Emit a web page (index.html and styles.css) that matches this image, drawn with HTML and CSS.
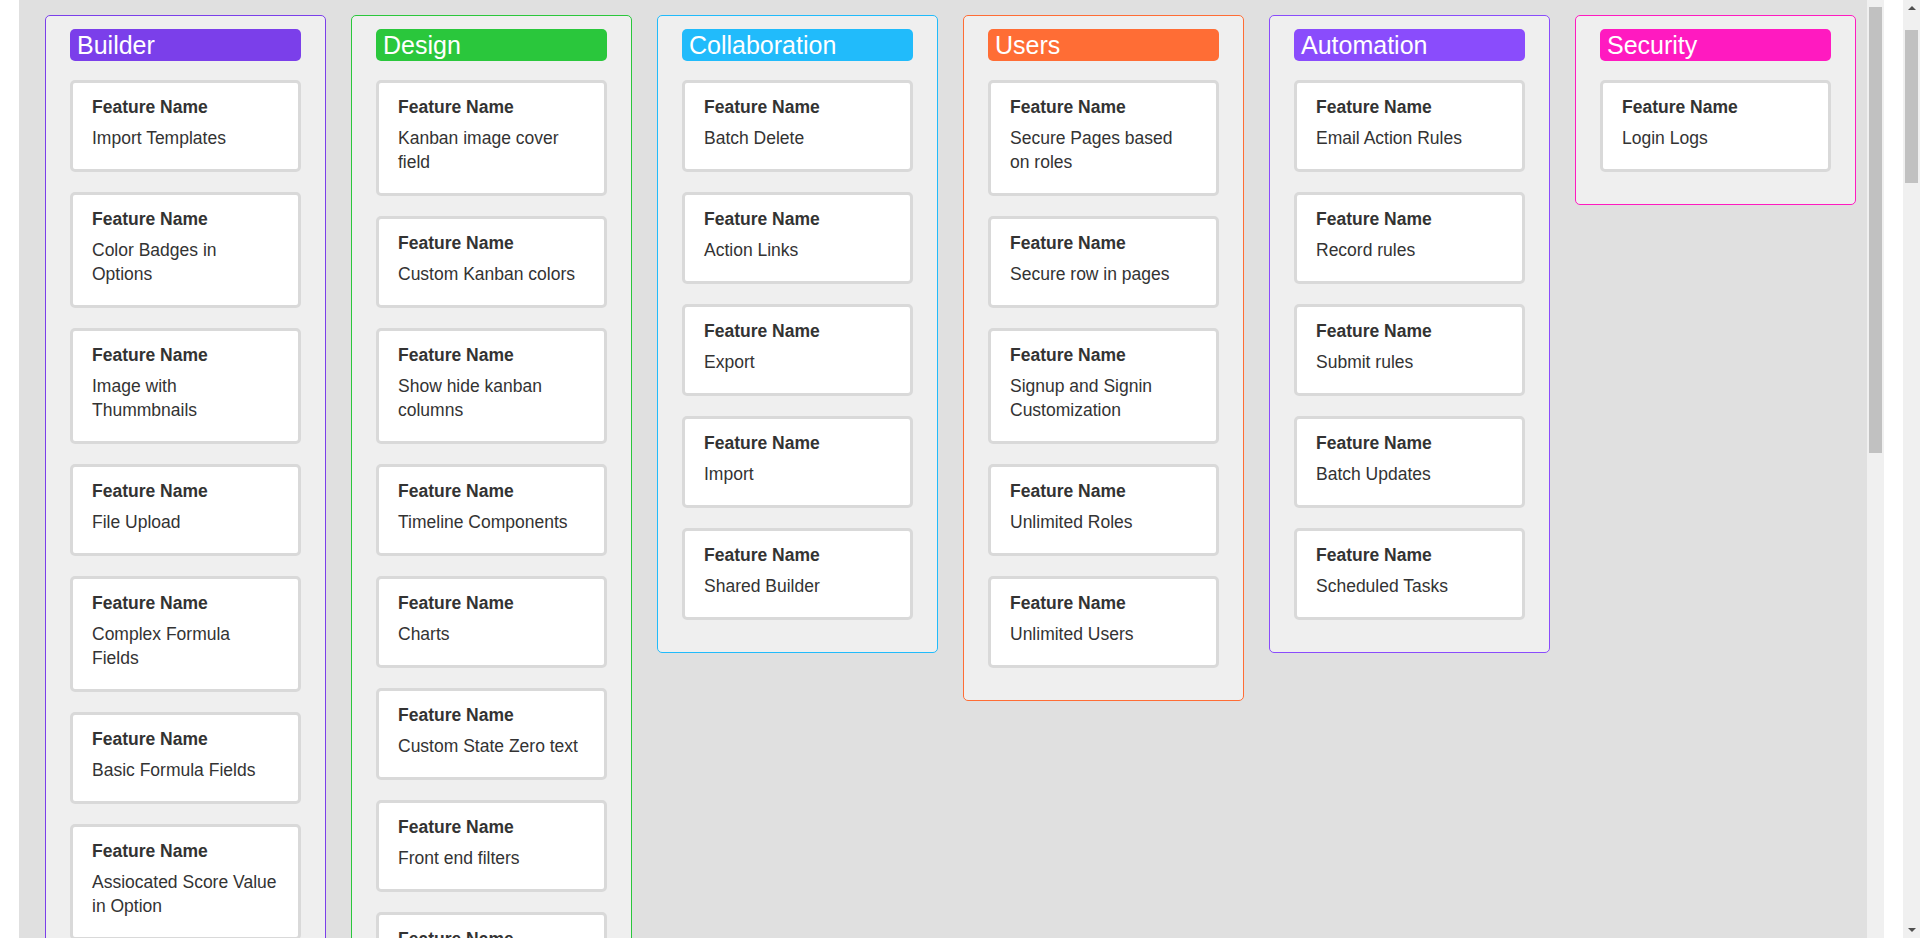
FILE: index.html
```html
<!DOCTYPE html>
<html lang="en">
<head>
    <meta charset="UTF-8">
    <meta name="viewport" content="width=device-width, initial-scale=1.0">
    <title>Feature Board</title>
    <link rel="stylesheet" href="styles.css">
</head>
<body>
    <div class="gutter"></div>

    <!-- Board with one column per feature group -->
    <div class="board">
        <div class="column builder">
            <div class="heading">Builder</div>
            <div class="card"><div class="card-title">Feature Name</div><div class="card-text">Import Templates</div></div>
            <div class="card"><div class="card-title">Feature Name</div><div class="card-text">Color Badges in Options</div></div>
            <div class="card"><div class="card-title">Feature Name</div><div class="card-text">Image with Thummbnails</div></div>
            <div class="card"><div class="card-title">Feature Name</div><div class="card-text">File Upload</div></div>
            <div class="card"><div class="card-title">Feature Name</div><div class="card-text">Complex Formula Fields</div></div>
            <div class="card"><div class="card-title">Feature Name</div><div class="card-text">Basic Formula Fields</div></div>
            <div class="card"><div class="card-title">Feature Name</div><div class="card-text">Assiocated Score Value in Option</div></div>
        </div>

        <div class="column design">
            <div class="heading">Design</div>
            <div class="card"><div class="card-title">Feature Name</div><div class="card-text">Kanban image cover field</div></div>
            <div class="card"><div class="card-title">Feature Name</div><div class="card-text">Custom Kanban colors</div></div>
            <div class="card"><div class="card-title">Feature Name</div><div class="card-text">Show hide kanban columns</div></div>
            <div class="card"><div class="card-title">Feature Name</div><div class="card-text">Timeline Components</div></div>
            <div class="card"><div class="card-title">Feature Name</div><div class="card-text">Charts</div></div>
            <div class="card"><div class="card-title">Feature Name</div><div class="card-text">Custom State Zero text</div></div>
            <div class="card"><div class="card-title">Feature Name</div><div class="card-text">Front end filters</div></div>
            <div class="card"><div class="card-title">Feature Name</div><div class="card-text">Calendar View</div></div>
        </div>

        <div class="column collaboration">
            <div class="heading">Collaboration</div>
            <div class="card"><div class="card-title">Feature Name</div><div class="card-text">Batch Delete</div></div>
            <div class="card"><div class="card-title">Feature Name</div><div class="card-text">Action Links</div></div>
            <div class="card"><div class="card-title">Feature Name</div><div class="card-text">Export</div></div>
            <div class="card"><div class="card-title">Feature Name</div><div class="card-text">Import</div></div>
            <div class="card"><div class="card-title">Feature Name</div><div class="card-text">Shared Builder</div></div>
        </div>

        <div class="column users">
            <div class="heading">Users</div>
            <div class="card"><div class="card-title">Feature Name</div><div class="card-text">Secure Pages based on&nbsp;roles</div></div>
            <div class="card"><div class="card-title">Feature Name</div><div class="card-text">Secure row in pages</div></div>
            <div class="card"><div class="card-title">Feature Name</div><div class="card-text">Signup and Signin Customization</div></div>
            <div class="card"><div class="card-title">Feature Name</div><div class="card-text">Unlimited Roles</div></div>
            <div class="card"><div class="card-title">Feature Name</div><div class="card-text">Unlimited Users</div></div>
        </div>

        <div class="column automation">
            <div class="heading">Automation</div>
            <div class="card"><div class="card-title">Feature Name</div><div class="card-text">Email Action Rules</div></div>
            <div class="card"><div class="card-title">Feature Name</div><div class="card-text">Record rules</div></div>
            <div class="card"><div class="card-title">Feature Name</div><div class="card-text">Submit rules</div></div>
            <div class="card"><div class="card-title">Feature Name</div><div class="card-text">Batch Updates</div></div>
            <div class="card"><div class="card-title">Feature Name</div><div class="card-text">Scheduled Tasks</div></div>
        </div>

        <div class="column security">
            <div class="heading">Security</div>
            <div class="card"><div class="card-title">Feature Name</div><div class="card-text">Login Logs</div></div>
        </div>
    </div>

    <!-- Inner scrollbar of the board -->
    <div class="track">
        <div class="track-thumb"></div>
    </div>

    <div class="gutter"></div>

    <!-- Window scrollbar -->
    <div class="sbar">
        <div class="arrow arrow-up"></div>
        <div class="sbar-thumb"></div>
        <div class="arrow arrow-down"></div>
    </div>
</body>
</html>
```

FILE: styles.css
```css
/* Page frame */
body {
    margin: 0;
    height: 100vh;
    overflow: hidden;
    display: flex;
    background-color: white;
    font-family: "Liberation Sans", Arial, sans-serif;
    color: #333;
}

.gutter {
    width: 19px;
    flex-shrink: 0;
}

/* Board holding the columns */
.board {
    flex: 1;
    display: flex;
    align-items: flex-start;
    gap: 25px;
    padding: 15px 0 0 26px;
    background-color: #e0e0e0;
    overflow: hidden;
}

/* One column per group */
.column {
    width: 281px;
    flex-shrink: 0;
    box-sizing: border-box;
    padding: 13px 24px 12px;
    border: 1px solid #999;
    border-radius: 5px;
    background-color: #efefef;
}

.heading {
    height: 32px;
    line-height: 32px;
    padding-left: 7px;
    margin-bottom: 19px;
    border-radius: 5px;
    color: white;
    font-size: 25px;
}

/* Group colours */
.builder { border-color: #7b3fea; }
.builder .heading { background-color: #7b3fea; }
.design { border-color: #2ac73c; }
.design .heading { background-color: #2ac73c; }
.collaboration { border-color: #21bbfb; }
.collaboration .heading { background-color: #21bbfb; }
.users { border-color: #ff6d35; }
.users .heading { background-color: #ff6d35; }
.automation { border-color: #8a4cfc; }
.automation .heading { background-color: #8a4cfc; }
.security { border-color: #ff1ac0; }
.security .heading { background-color: #ff1ac0; }

/* Feature card */
.card {
    padding: 12px 17.7px 19px 19px;
    margin-bottom: 20px;
    border: 3px solid #d9d9d9;
    border-radius: 5px;
    background-color: white;
    font-size: 17.5px;
}

.card-title {
    font-weight: bold;
    line-height: 24.5px;
    margin-bottom: 6.5px;
}

.card-text {
    line-height: 24px;
}

/* Inner scrollbar */
.track {
    width: 17px;
    flex-shrink: 0;
    background-color: #f0f0f0;
}

.track-thumb {
    height: 446px;
    margin: 7px 2px 0;
    background-color: #c1c1c1;
}

/* Window scrollbar */
.sbar {
    width: 17px;
    flex-shrink: 0;
    display: flex;
    flex-direction: column;
    background-color: #f0f0f0;
}

.sbar-thumb {
    height: 153px;
    margin: 20px 2px 0;
    background-color: #c1c1c1;
}

.arrow {
    width: 0;
    height: 0;
    margin: 6px auto 0;
    border-left: 4px solid transparent;
    border-right: 4px solid transparent;
}

.arrow-up {
    border-bottom: 4px solid #505050;
}

.arrow-down {
    margin: auto auto 6px;
    border-top: 4px solid #505050;
}
```
